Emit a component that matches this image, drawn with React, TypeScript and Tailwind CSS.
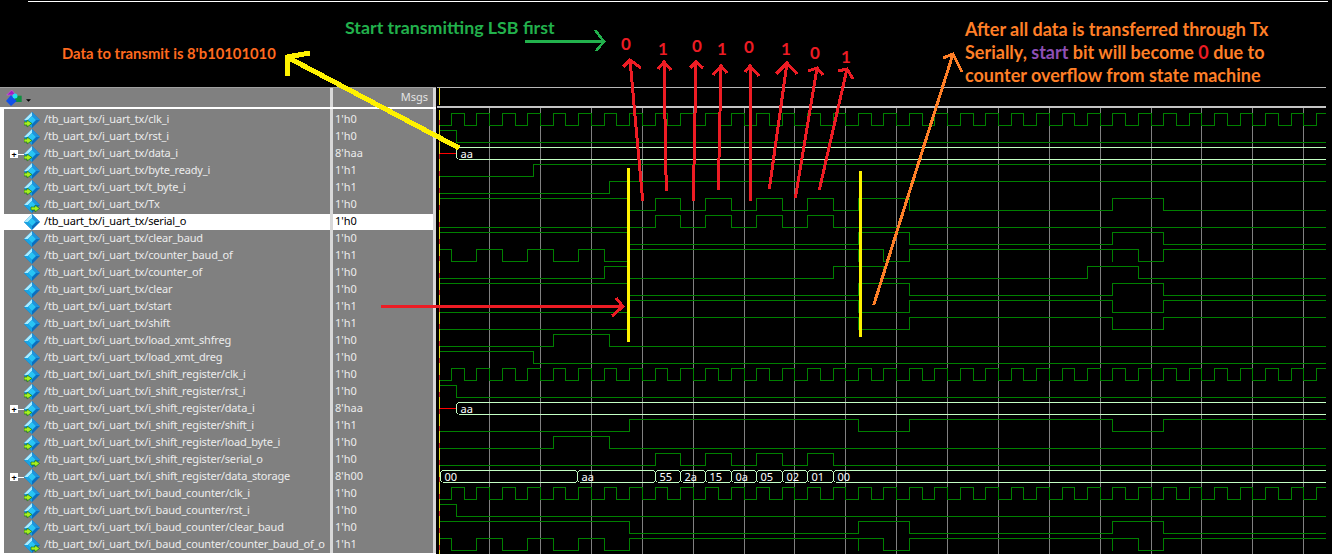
import React from 'react'

type Sig = {
  name: string
  val: string
  icon: 'in' | 'out' | 'none'
  expand?: boolean
  selected?: boolean
}

const TX = '/tb_uart_tx/i_uart_tx/'
const SR = '/tb_uart_tx/i_uart_tx/i_shift_register/'
const BC = '/tb_uart_tx/i_uart_tx/i_baud_counter/'

const signals: Sig[] = [
  { name: TX + 'clk_i', val: "1'h0", icon: 'in' },
  { name: TX + 'rst_i', val: "1'h0", icon: 'in' },
  { name: TX + 'data_i', val: "8'haa", icon: 'in', expand: true },
  { name: TX + 'byte_ready_i', val: "1'h1", icon: 'in' },
  { name: TX + 't_byte_i', val: "1'h1", icon: 'in' },
  { name: TX + 'Tx', val: "1'h0", icon: 'out' },
  { name: TX + 'serial_o', val: "1'h0", icon: 'none', selected: true },
  { name: TX + 'clear_baud', val: "1'h0", icon: 'none' },
  { name: TX + 'counter_baud_of', val: "1'h1", icon: 'none' },
  { name: TX + 'counter_of', val: "1'h0", icon: 'none' },
  { name: TX + 'clear', val: "1'h0", icon: 'none' },
  { name: TX + 'start', val: "1'h1", icon: 'none' },
  { name: TX + 'shift', val: "1'h1", icon: 'none' },
  { name: TX + 'load_xmt_shfreg', val: "1'h0", icon: 'none' },
  { name: TX + 'load_xmt_dreg', val: "1'h0", icon: 'none' },
  { name: SR + 'clk_i', val: "1'h0", icon: 'in' },
  { name: SR + 'rst_i', val: "1'h0", icon: 'in' },
  { name: SR + 'data_i', val: "8'haa", icon: 'in', expand: true },
  { name: SR + 'shift_i', val: "1'h1", icon: 'in' },
  { name: SR + 'load_byte_i', val: "1'h0", icon: 'in' },
  { name: SR + 'serial_o', val: "1'h0", icon: 'out' },
  { name: SR + 'data_storage', val: "8'h00", icon: 'none', expand: true },
  { name: BC + 'clk_i', val: "1'h0", icon: 'in' },
  { name: BC + 'rst_i', val: "1'h0", icon: 'in' },
  { name: BC + 'clear_baud', val: "1'h0", icon: 'in' },
  { name: BC + 'counter_baud_of_o', val: "1'h1", icon: 'out' },
]

// clock half periods are the time base of the wave window
const tx = (n: number) => Math.floor(451.5 + 12.72 * n) + 0.5
const hiY = (row: number) => 113.5 + 17 * row
const loY = (row: number) => 125.5 + 17 * row

const clkEdges = Array.from({ length: 69 }, (_, i) => i)
const main5 = [14, 32, 36, 52, 56]
const serial = [16, 18, 20, 22, 24, 26, 28, 30]
const ofEdges = [0, 2, 4, 6, 8, 10, 12, 14, 34, 36, 54, 56]

const digital: { row: number; high: boolean; edges: number[]; glitch?: number[] }[] = [
  { row: 0, high: false, edges: clkEdges },
  { row: 1, high: true, edges: [0.4] },
  { row: 3, high: false, edges: [6.45] },
  { row: 4, high: false, edges: [12.44] },
  { row: 5, high: true, edges: [14, 16, 18, 20, 22, 24, 26, 28, 30, 32, 36, 52, 56] },
  { row: 6, high: false, edges: serial },
  { row: 7, high: true, edges: main5 },
  { row: 8, high: true, edges: ofEdges, glitch: [32, 52] },
  { row: 9, high: false, edges: [12, 14, 30, 34, 50, 54] },
  { row: 10, high: true, edges: main5 },
  { row: 11, high: false, edges: main5 },
  { row: 12, high: false, edges: main5 },
  { row: 13, high: false, edges: [8, 12.44] },
  { row: 14, high: true, edges: [6.45] },
  { row: 15, high: false, edges: clkEdges },
  { row: 16, high: true, edges: [0.4] },
  { row: 18, high: false, edges: main5 },
  { row: 19, high: false, edges: [8, 12.44] },
  { row: 20, high: false, edges: serial },
  { row: 22, high: false, edges: clkEdges },
  { row: 23, high: true, edges: [0.4] },
  { row: 24, high: true, edges: main5 },
  { row: 25, high: true, edges: ofEdges, glitch: [32, 52] },
]

const WAVE_L = 440
const WAVE_R = 1326

function wavePath(row: number, high: boolean, edges: number[]) {
  let level = high
  let d = `M${WAVE_L} ${level ? hiY(row) : loY(row)}`
  for (const e of edges) {
    const x = tx(e)
    d += `H${x}`
    level = !level
    d += `V${level ? hiY(row) : loY(row)}`
  }
  return d + `H${WAVE_R}`
}

function BusRow({ row, segs, start }: { row: number; segs: { x: number; label: string }[]; start?: number }) {
  const top = hiY(row)
  const bot = loY(row)
  let d = ''
  segs.forEach((s, i) => {
    const end = i + 1 < segs.length ? segs[i + 1].x - 2 : WAVE_R
    d += `M${s.x + 2} ${top}H${end}M${s.x + 2} ${bot}H${end}`
    d += `M${s.x + 2} ${top}L${s.x} ${top + 2}V${bot - 2}L${s.x + 2} ${bot}`
    if (i > 0) d += `M${s.x - 2} ${top}L${s.x} ${top + 2}M${s.x - 2} ${bot}L${s.x} ${bot - 2}`
  })
  return (
    <g>
      {start !== undefined && (
        <path d={`M${start} ${(top + bot) / 2}H${segs[0].x}`} stroke="#ff0000" fill="none" />
      )}
      <path d={d} stroke="#c4ffc4" fill="none" />
      {segs.map((s) => (
        <text key={s.x} x={s.x + 4} y={top + 10} fill="#ffffff" fontSize="11" fontFamily="'Noto Sans', sans-serif">
          {s.label}
        </text>
      ))}
    </g>
  )
}

function WaveIcon({ kind }: { kind: Sig['icon'] }) {
  return (
    <svg width="16" height="16" viewBox="0 0 16 16" className="shrink-0">
      <polygon points="8,0 16,8 8,16 0,8" fill="#0a6fc0" />
      <polygon points="8,0 16,8 12,8 8,4" fill="#1f93dc" />
      <polygon points="8,0 0,8 4,8 8,4" fill="#a8ecff" />
      <polygon points="0,8 8,16 8,12 4,8" fill="#18a4e4" />
      <polygon points="8,4 12,8 8,12 4,8" fill="#28c4f4" />
      {kind === 'in' && (
        <polygon points="0,10 3,10 3,8 8,11.5 3,15 3,13 0,13" fill="#a8f020" stroke="#0a6a10" strokeWidth="0.6" />
      )}
      {kind === 'out' && (
        <polygon points="7,10 11,10 11,8 15.5,11.5 11,15 11,13 7,13" fill="#a8f020" stroke="#0a6a10" strokeWidth="0.6" />
      )}
    </svg>
  )
}

function ExpandBox() {
  return (
    <span className="absolute left-[6px] top-[4px] flex items-center">
      <span className="flex h-[8px] w-[8px] items-center justify-center bg-white text-[9px] leading-none font-bold text-black">
        +
      </span>
      <span className="h-px w-[6px] bg-white" />
    </span>
  )
}

function SignalRow({ sig }: { sig: Sig }) {
  const cell = sig.selected ? 'bg-white text-black' : 'bg-[#808080] text-[#ececec]'
  return (
    <div className="flex h-[17px]">
      <div className={`relative flex w-[326px] items-center border-t border-[#808080] pl-[20px] ${cell}`}>
        {sig.expand && <ExpandBox />}
        <WaveIcon kind={sig.icon} />
        <span className="ml-[4px] whitespace-nowrap pb-[2px] tracking-[-0.17px]">{sig.name}</span>
      </div>
      <div className="w-[3px] bg-[#d8d8d8]" />
      <div className={`flex w-[100px] items-center border-t border-[#808080] pb-[2px] pl-[2px] ${cell}`}>{sig.val}</div>
      <div className="w-[3px] bg-[#d8d8d8]" />
    </div>
  )
}

function WaveWindow() {
  const grid = Array.from({ length: 17 }, (_, k) => tx(3 + 4 * k))
  return (
    <svg width="896" height="467" viewBox="436 87 896 467" className="block" shapeRendering="crispEdges">
      <rect x="437" y="87" width="889" height="1" fill="#b8b8b8" />
      <rect x="437" y="106" width="889" height="2" fill="#c4c4c4" />
      {grid.map((x) => (
        <path key={x} d={`M${x} 108V554`} stroke="#808080" fill="none" />
      ))}
      <path d="M439.5 88V105M439.5 110V554" stroke="#e8d820" fill="none" />
      {signals.map((_, i) => (
        <path key={i} d={`M439.5 ${120 + 17 * i}v5`} stroke="#c83020" fill="none" />
      ))}
      {digital.map((s) => (
        <g key={s.row}>
          <path d={wavePath(s.row, s.high, s.edges)} stroke="#008000" fill="none" />
          {s.glitch?.map((g) => (
            <path key={g} d={`M${tx(g)} ${hiY(s.row)}V${loY(s.row)}`} stroke="#008000" fill="none" />
          ))}
        </g>
      ))}
      <BusRow row={2} start={440} segs={[{ x: 456.5, label: 'aa' }]} />
      <BusRow row={17} start={440} segs={[{ x: 456.5, label: 'aa' }]} />
      <BusRow
        row={21}
        segs={[
          { x: 440.5, label: '00' },
          { x: 577.5, label: 'aa' },
          { x: tx(16), label: '55' },
          { x: tx(18), label: '2a' },
          { x: tx(20), label: '15' },
          { x: tx(22), label: '0a' },
          { x: tx(24), label: '05' },
          { x: tx(26), label: '02' },
          { x: tx(28), label: '01' },
          { x: tx(30), label: '00' },
        ]}
      />
    </svg>
  )
}

// paint-style arrows drawn over the capture: shaft from -> tip, plus two barbs
const redArrows = [
  { from: [642.7, 201], tip: [630, 60], a: [623, 67], b: [641, 68] },
  { from: [666.3, 191], tip: [664, 62], a: [658, 69], b: [671, 70] },
  { from: [693.3, 201], tip: [696, 62], a: [690, 68], b: [703, 68] },
  { from: [718.3, 190], tip: [721, 66], a: [713, 75], b: [727, 73] },
  { from: [750.3, 201], tip: [750, 66], a: [745, 72], b: [759, 76] },
  { from: [769.3, 189], tip: [787, 63], a: [776, 74], b: [797, 74] },
  { from: [795.3, 198], tip: [817, 68], a: [808, 71], b: [823, 75] },
  { from: [819.3, 190], tip: [847, 69], a: [838, 71], b: [853, 79] },
]

function Arrow({ from, tip, a, b, color, width }: { from: number[]; tip: number[]; a: number[]; b: number[]; color: string; width: number }) {
  return (
    <path
      d={`M${from[0]} ${from[1]}L${tip[0]} ${tip[1]}M${a[0]} ${a[1]}L${tip[0]} ${tip[1]}L${b[0]} ${b[1]}`}
      stroke={color}
      strokeWidth={width}
      fill="none"
    />
  )
}

const digits = [
  { t: '0', x: 626, y: 44 },
  { t: '1', x: 663, y: 49 },
  { t: '0', x: 697, y: 46 },
  { t: '1', x: 722, y: 49 },
  { t: '0', x: 749, y: 47 },
  { t: '1', x: 786, y: 49 },
  { t: '0', x: 815, y: 53 },
  { t: '1', x: 846, y: 57 },
]

export default function App() {
  return (
    <div className="relative h-[554px] w-[1332px] overflow-hidden bg-black font-['Noto_Sans',sans-serif] text-[11px]">
      {/* annotation strip above the wave window */}
      <div className="h-[87px] pt-px">
        <div className="ml-[28px] mr-[4px] h-px bg-white" />
      </div>

      <div className="flex h-[467px]">
        <div className="w-[436px] bg-white">
          <div className="flex h-[20px] border-t border-[#a0a0a0] bg-[#808080]">
            <div className="w-[330px] pl-[6px]">
              <svg width="30" height="19" viewBox="0 1 30 19">
                <polygon points="0.7,8 5.7,3 10,8" fill="#a020c0" stroke="#e060f0" strokeWidth="0.5" />
                <rect x="9" y="8.7" width="6.7" height="6.3" fill="#109040" />
                <polygon points="0,14 5,8 10.7,14 5,19" fill="#1050e8" />
                <circle cx="9" cy="9" r="2.5" fill="#20e0f0" />
                <polygon points="20,12.3 25,12.3 22.5,14.7" fill="#000000" />
              </svg>
            </div>
            <div className="w-[3px] bg-[#d8d8d8]" />
            <div className="flex w-[95px] items-center justify-end text-[#e4e4e4]">Msgs</div>
            <div className="w-[5px] bg-[#808080]" />
            <div className="w-[3px] bg-[#d8d8d8]" />
          </div>
          <div className="h-[2px] bg-white" />
          <div className="pl-[4px]">
            <div className="flex h-[2px]">
              <div className="w-[326px] bg-[#808080]" />
              <div className="w-[3px] bg-[#d8d8d8]" />
              <div className="w-[100px] bg-[#808080]" />
              <div className="w-[3px] bg-[#d8d8d8]" />
            </div>
            {signals.map((s, i) => (
              <SignalRow key={i} sig={s} />
            ))}
          </div>
        </div>
        <WaveWindow />
      </div>

      {/* notes painted on top of the capture */}
      <svg width="1332" height="554" viewBox="0 0 1332 554" className="absolute inset-0" shapeRendering="crispEdges">
        <path d="M628.5 168V342M860.5 171V337" stroke="#fff200" strokeWidth="3" fill="none" />
        {redArrows.map((r, i) => (
          <Arrow key={i} {...r} color="#ed1c24" width={3} />
        ))}
        <Arrow from={[381, 306.5]} tip={[623, 306.5]} a={[616, 298]} b={[612, 316]} color="#ed1c24" width={3} />
        <Arrow from={[525, 41.5]} tip={[604, 41.5]} a={[595, 30]} b={[596, 51]} color="#22b14c" width={2.5} />
        <Arrow from={[873.7, 305]} tip={[953, 54]} a={[943, 58]} b={[962, 72]} color="#ff7f27" width={3} />
        <Arrow from={[459, 148]} tip={[287, 57]} a={[310, 53]} b={[287, 76]} color="#fff200" width={5} />
      </svg>

      <div className="absolute left-[62px] top-[43px] whitespace-nowrap font-['Lato',sans-serif] text-[14.8px] leading-[20px] font-bold text-[#ff6a1f]">
        Data to transmit is 8'b10101010
      </div>
      <div className="absolute left-[345px] top-[17px] whitespace-nowrap font-['Lato',sans-serif] text-[17.8px] leading-[20px] font-bold text-[#22b14c]">
        Start transmitting LSB first
      </div>
      <div className="absolute left-[965px] top-[18px] whitespace-nowrap font-['Lato',sans-serif] text-[18px] leading-[23px] font-bold text-[#ff7f27]">
        <div>After all data is transferred through Tx</div>
        <div>
          Serially, <span className="text-[#8e4fb5]">start</span> bit will become <span className="text-[#ed1c24]">0</span> due to
        </div>
        <div>counter overflow from state machine</div>
      </div>
      {digits.map((d, i) => (
        <span
          key={i}
          className="absolute -translate-x-1/2 -translate-y-1/2 font-['Lato',sans-serif] text-[17px] font-bold text-[#ed1c24]"
          style={{ left: d.x, top: d.y }}
        >
          {d.t}
        </span>
      ))}
    </div>
  )
}
